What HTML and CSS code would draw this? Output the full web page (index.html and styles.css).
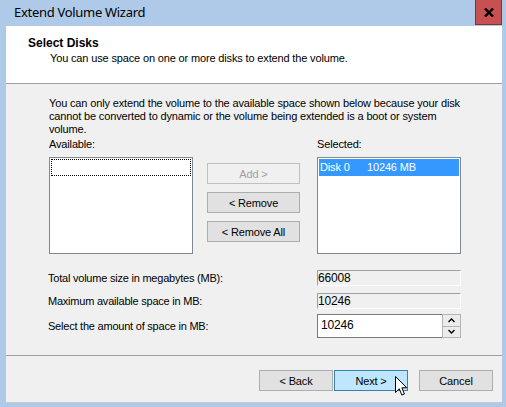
FILE: index.html
```html
<!DOCTYPE html>
<html>
<head>
<meta charset="utf-8">
<link rel="stylesheet" href="styles.css">
</head>
<body>
<div class="window">
  <div class="titlebar">
    <span class="title">Extend Volume Wizard</span>
    <div class="close">
      <svg width="10" height="9" viewBox="0 0 10 9"><path d="M1 0.5 L9 8.5 M9 0.5 L1 8.5" stroke="#000" stroke-width="2.4" fill="none"/></svg>
    </div>
  </div>
  <div class="client">
    <div class="header">
      <div class="h-title">Select Disks</div>
      <div class="h-sub">You can use space on one or more disks to extend the volume.</div>
    </div>
    <div class="main">
      <p class="info">You can only extend the volume to the available space shown below because your disk<br>cannot be converted to dynamic or the volume being extended is a boot or system<br>volume.</p>
      <div class="pickers">
        <div class="col">
          <div class="lbl">Available:</div>
          <div class="listbox"><div class="focus"></div></div>
        </div>
        <div class="mid">
          <button class="btn wide" disabled>Add &gt;</button>
          <button class="btn wide">&lt; Remove</button>
          <button class="btn wide">&lt; Remove All</button>
        </div>
        <div class="col right">
          <div class="lbl">Selected:</div>
          <div class="listbox"><div class="item sel"><span class="disk">Disk 0</span><span>10246 MB</span></div></div>
        </div>
      </div>
      <div class="fields">
        <div class="frow r1">
          <span class="flabel">Total volume size in megabytes (MB):</span>
          <div class="ro">66008</div>
        </div>
        <div class="frow r2">
          <span class="flabel">Maximum available space in MB:</span>
          <div class="ro">10246</div>
        </div>
        <div class="frow r3">
          <span class="flabel">Select the amount of space in MB:</span>
          <div class="spin">
            <div class="spin-input">10246</div>
            <div class="spin-btns">
              <div class="sb"><svg width="7" height="5" viewBox="0 0 7 5"><path d="M0.5 4 L3.5 1 L6.5 4" stroke="#000" stroke-width="1.3" fill="none"/></svg></div>
              <div class="sb"><svg width="7" height="5" viewBox="0 0 7 5"><path d="M0.5 1 L3.5 4 L6.5 1" stroke="#000" stroke-width="1.3" fill="none"/></svg></div>
            </div>
          </div>
        </div>
      </div>
    </div>
    <div class="footer">
      <button class="btn">&lt; Back</button>
      <button class="btn next">Next &gt;</button>
      <button class="btn cancel">Cancel</button>
      <svg class="cursor" width="13" height="21" viewBox="0 0 13 21"><path d="M0.5 0.5 L0.5 16.5 L4.3 12.8 L6.8 19 L9.4 18 L6.9 11.8 L11.8 11.8 Z" fill="#fff" stroke="#000" stroke-width="1" stroke-linejoin="miter"/></svg>
    </div>
  </div>
</div>
</body>
</html>
```
FILE: styles.css
```css
html, body {
  margin: 0;
  padding: 0;
}
body {
  width: 506px;
  height: 407px;
  overflow: hidden;
  background: #aecae8;
  font-family: "Liberation Sans", Arial, sans-serif;
  font-size: 11px;
  letter-spacing: -0.15px;
  color: #000;
}
.window {
  display: flex;
  flex-direction: column;
  height: 407px;
}
.titlebar {
  height: 26px;
  display: flex;
  align-items: flex-start;
}
.title {
  margin-left: 14px;
  margin-top: 3px;
  font-family: "Noto Sans", sans-serif;
  font-size: 13px;
  letter-spacing: -0.3px;
  line-height: 19px;
  color: #000;
}
.close {
  margin-left: auto;
  margin-right: 4px;
  width: 27px;
  height: 25px;
  box-sizing: border-box;
  background: #c75050;
  border-left: 1px solid #7d3535;
  border-bottom: 1px solid #7d3535;
  border-right: 1px solid #7d3535;
  display: flex;
  align-items: center;
  justify-content: center;
}
.client {
  margin: 0 4px 0 6px;
  height: 377px;
  background: #f0f0f0;
  display: flex;
  flex-direction: column;
  border-bottom: 1px solid #c8c8c8;
  box-sizing: border-box;
}
.header {
  height: 58px;
  box-sizing: border-box;
  background: #fff;
  border-bottom: 1px solid #a0a0a0;
  padding-top: 10px;
  padding-left: 22px;
}
.h-title {
  font-weight: bold;
  font-size: 12px;
  letter-spacing: 0;
  line-height: 15px;
}
.h-sub {
  padding-left: 22px;
  line-height: 14px;
}
.main {
  padding: 13px 0 0 43px;
}
.info {
  margin: 0;
  line-height: 13px;
}
.pickers {
  display: flex;
  margin-top: 2px;
}
.lbl {
  line-height: 13px;
  height: 13px;
}
.listbox {
  margin-top: 6px;
  width: 144px;
  height: 97px;
  box-sizing: border-box;
  border: 1px solid #828790;
  background: #fff;
  padding: 1px;
}
.focus {
  height: 17px;
  box-sizing: border-box;
  border: 1px dotted #000;
}
.item {
  height: 17px;
  line-height: 16px;
  padding-left: 1px;
  display: flex;
}
.sel {
  background: #3399ff;
  color: #fff;
}
.disk {
  width: 47px;
}
.mid {
  margin-left: 14px;
  padding-top: 25px;
  display: flex;
  flex-direction: column;
  gap: 8px;
}
.col.right {
  margin-left: 17px;
}
.btn {
  width: 74px;
  height: 21px;
  box-sizing: border-box;
  border: 1px solid #adadad;
  background: #e1e1e1;
  font-family: "Liberation Sans", Arial, sans-serif;
  font-size: 11px;
  letter-spacing: -0.15px;
  color: #000;
  padding: 0;
  margin: 0;
}
.btn.wide {
  width: 93px;
}
.btn:disabled {
  border-color: #bfbfbf;
  background: #f0f0f0;
  color: #a0a0a0;
}
.fields {
  margin-top: 16px;
  margin-left: -1px;
}
.frow {
  display: flex;
  align-items: center;
}
.r2 {
  margin-top: 7px;
}
.r3 {
  margin-top: 5px;
}
.flabel {
  width: 269px;
  letter-spacing: -0.22px;
}
.ro {
  width: 144px;
  height: 16px;
  box-sizing: border-box;
  border-top: 1px solid #a0a0a0;
  border-left: 1px solid #a0a0a0;
  border-right: 1px solid #fff;
  border-bottom: 1px solid #fff;
  background: #f0f0f0;
  padding-left: 0;
  line-height: 14px;
  font-size: 12px;
}
.spin {
  width: 144px;
  height: 24px;
  display: flex;
}
.spin-input {
  flex: 1;
  box-sizing: border-box;
  border: 1px solid #7a7a7a;
  border-right: none;
  background: #fff;
  padding-left: 3px;
  line-height: 20px;
  font-size: 12px;
}
.spin-btns {
  width: 19px;
  display: flex;
  flex-direction: column;
  box-sizing: border-box;
  border: 1px solid #b4b4b4;
  background: #b4b4b4;
  gap: 1px;
}
.sb {
  flex: 1;
  background: #ececec;
  display: flex;
  align-items: center;
  justify-content: center;
}
.footer {
  margin-top: auto;
  height: 47px;
  box-sizing: border-box;
  border-top: 1px solid #a0a0a0;
  padding-top: 14px;
  padding-right: 9px;
  display: flex;
  justify-content: flex-end;
  align-items: flex-start;
  position: relative;
}
.next {
  margin-left: 1px;
  background: #bee6fd;
  border-color: #3c7fb1;
}
.cancel {
  margin-left: 11px;
}
.cursor {
  position: absolute;
  left: 389px;
  top: 20px;
}
```
